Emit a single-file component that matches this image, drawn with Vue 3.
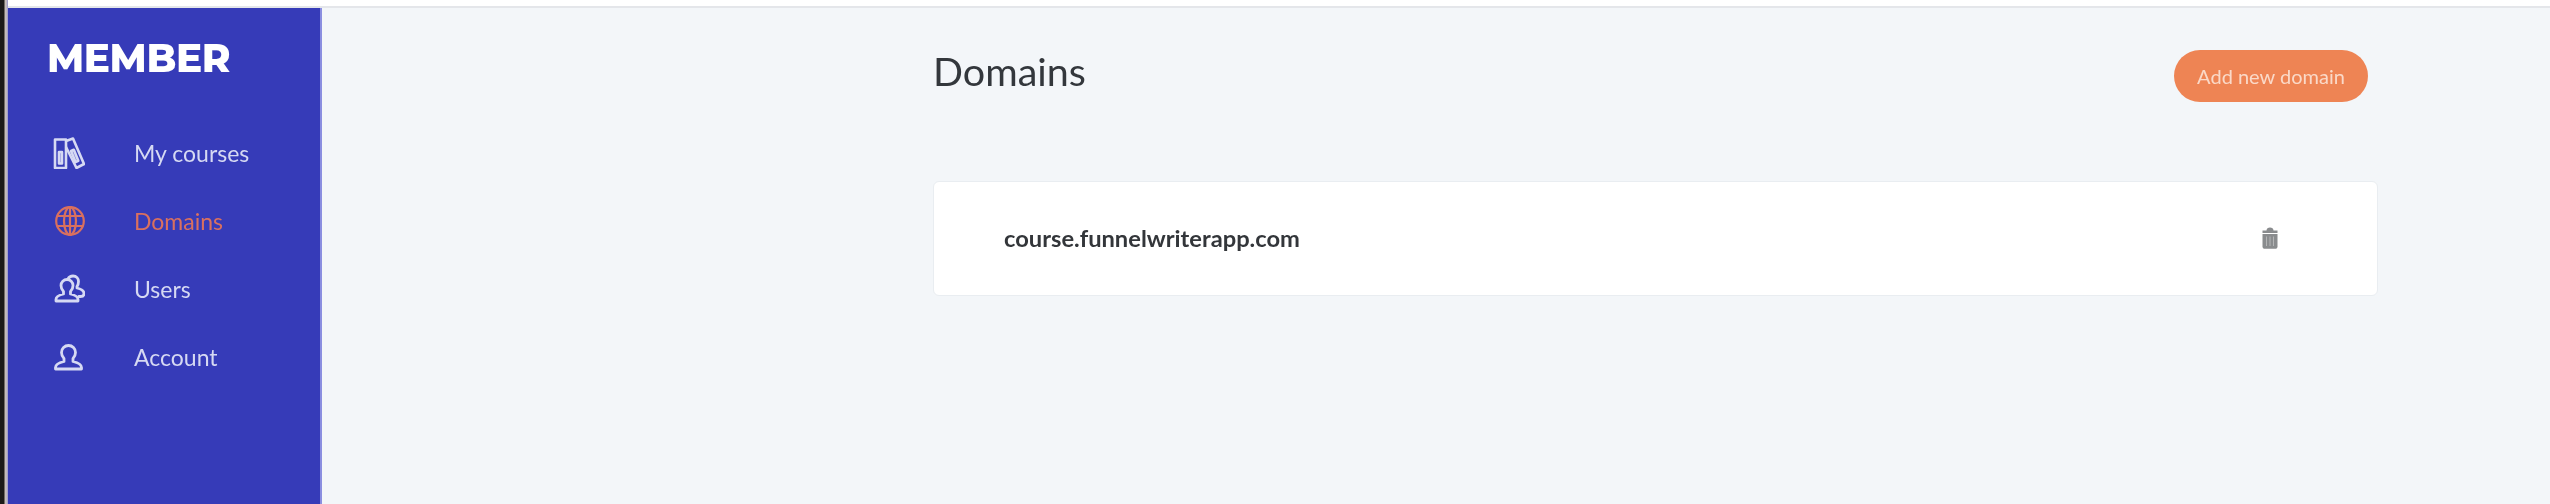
<script setup>
const items = [
  { label: 'My courses', icon: 'books' },
  { label: 'Domains', icon: 'globe', active: true },
  { label: 'Users', icon: 'users' },
  { label: 'Account', icon: 'user' }
]
</script>

<template>
  <div class="screen">
    <div class="edge"></div>
    <div class="window">
      <div class="topbar"></div>
      <div class="body">
        <aside class="sidebar">
          <div class="logo">MEMBER</div>
          <nav class="nav">
            <a v-for="item in items" :key="item.label" class="nav-item" :class="{ active: item.active }">
              <span class="nav-icon">
                <svg v-if="item.icon === 'books'" width="32" height="32" viewBox="0 0 32 32" fill="none" stroke="currentColor" stroke-width="2.600" stroke-linejoin="round">
                  <path d="M2 2.500h11V31H2z" />
                  <path d="M6 15h3v11.500H6z" fill="#d6d9f3" fill-opacity="0.35" />
                  <path d="M13 4l7-2.500L31 27l-7.500 4L13 10" />
                  <path d="M18 14l2.800-1.200 4.500 11-2.800 1.300z" fill="#d6d9f3" fill-opacity="0.35" />
                </svg>
                <svg v-else-if="item.icon === 'globe'" width="32" height="32" viewBox="0 0 32 32" fill="none" stroke="currentColor" stroke-width="2.200">
                  <circle cx="17" cy="16" r="13.800" />
                  <ellipse cx="17" cy="16" rx="6" ry="13.800" />
                  <path d="M17 2.500v27M4.500 11h25M4.500 21h25" />
                </svg>
                <svg v-else-if="item.icon === 'users'" width="32" height="32" viewBox="0 0 32 32" fill="none" stroke="currentColor" stroke-width="2.800" stroke-linejoin="round" stroke-linecap="round">
                  <path d="M3 28v-1.500c0-3 3-4.500 7.500-5.500v-2.500C9 17 8 15 8 12.500A6 6 0 0 1 20 12.500c0 2.500-1 4.500-2.500 6V21c4.500 1 7.500 2.500 7.500 5.500V28z" />
                  <path d="M15 6C16 4 18 3 20 3c3.500 0 5.500 2.500 5.500 5.500 0 2-.5 3.500-1.500 5v1.500c4 1 7 2.500 7 5.500 0 2-1.500 3-3.500 3H26" />
                </svg>
                <svg v-else width="32" height="32" viewBox="0 0 32 32" fill="none" stroke="currentColor" stroke-width="2.800" stroke-linejoin="round">
                  <path d="M2.500 28v-1.500c0-3.500 4-5 8.500-6v-3c-1.500-1.500-2.500-3.500-2.500-6a7 7 0 0 1 14 0c0 2.500-1 4.500-2.500 6v3c4.500 1 8.500 2.500 8.500 6V28z" />
                </svg>
              </span>
              <span class="nav-label">{{ item.label }}</span>
            </a>
          </nav>
        </aside>
        <main class="main">
          <div class="content">
            <header class="head">
              <h1 class="title">Domains</h1>
              <button class="add">Add new domain</button>
            </header>
            <section class="card">
              <span class="domain">course.funnelwriterapp.com</span>
              <svg class="trash" width="18" height="22" viewBox="0 0 18 22" fill="#8a8c8e">
                <path d="M5.500 3.500C5.500 1.500 7 .5 9 .5s3.500 1 3.500 3h4v2.500H1.500V3.500z" />
                <path d="M1.500 7h15v12.500c0 1.400-1 2.300-2.300 2.300H3.800c-1.300 0-2.300-.9-2.300-2.300z" />
                <path d="M5.500 9.500v9.500M9 9.500v9.500M12.500 9.500v9.500" stroke="#b4b5b6" stroke-width="1" />
              </svg>
            </section>
          </div>
        </main>
      </div>
    </div>
  </div>
</template>

<style>
html, body { margin: 0; padding: 0; }
</style>

<style scoped>
.screen {
  display: flex;
  width: 2550px;
  height: 504px;
  overflow: hidden;
  background: #fff;
  font-family: "Lato", "Liberation Sans", sans-serif;
}
.edge {
  width: 8px;
  flex: none;
  background: linear-gradient(90deg, #1b1a18 0 4px, #c9bfb4 5px, #b9b4c4 7px, #8f8fc8 8px);
}
.window {
  flex: 1;
  display: flex;
  flex-direction: column;
  min-width: 0;
  filter: blur(0.7px);
}
.topbar {
  height: 6px;
  flex: none;
  background: #fff;
  border-bottom: 2px solid #e4e6ea;
}
.body {
  flex: 1;
  display: flex;
  min-height: 0;
}
.sidebar {
  width: 314px;
  flex: none;
  box-sizing: border-box;
  background: #363bb8;
  padding: 28px 0 0 39px;
  border-right: 2px solid #8a8ee0;
}
.logo {
  color: #fff;
  font-family: "Montserrat", "Open Sans", sans-serif;
  font-weight: 800;
  font-size: 39px;
  line-height: 44px;
  letter-spacing: -0.4px;
  margin-bottom: 39px;
  height: 44px;
}
.nav {
  display: flex;
  flex-direction: column;
}
.nav-item {
  display: flex;
  align-items: center;
  height: 68px;
  color: #d6d9f3;
  font-size: 23px;
}
.nav-item.active {
  color: #d9705f;
}
.nav-icon {
  width: 32px;
  height: 32px;
  flex: none;
  margin: 0 49px 0 6px;
  display: flex;
}
.main {
  flex: 1;
  min-width: 0;
  background: #f3f6f9;
}
.content {
  width: 1445px;
  margin-left: 611px;
  padding-top: 42px;
}
.head {
  display: flex;
  justify-content: space-between;
  align-items: center;
  height: 52px;
  padding-right: 10px;
  margin-bottom: 79px;
}
.title {
  margin: -10px 0 0;
  font-size: 39.500px;
  font-weight: 400;
  color: #33373c;
  line-height: 52px;
}
.add {
  width: 194px;
  height: 52px;
  border: 0;
  border-radius: 26px;
  background: #ee8454;
  color: #fad9c8;
  font-family: inherit;
  font-size: 20px;
  padding: 0;
}
.card {
  height: 115px;
  box-sizing: border-box;
  display: flex;
  align-items: center;
  justify-content: space-between;
  padding: 0 98px 2px 70px;
  background: #fff;
  border: 1px solid #e9edf1;
  border-radius: 6px;
}
.domain {
  font-size: 23.700px;
  font-weight: 700;
  color: #33363a;
}
.trash {
  flex: none;
}
</style>
